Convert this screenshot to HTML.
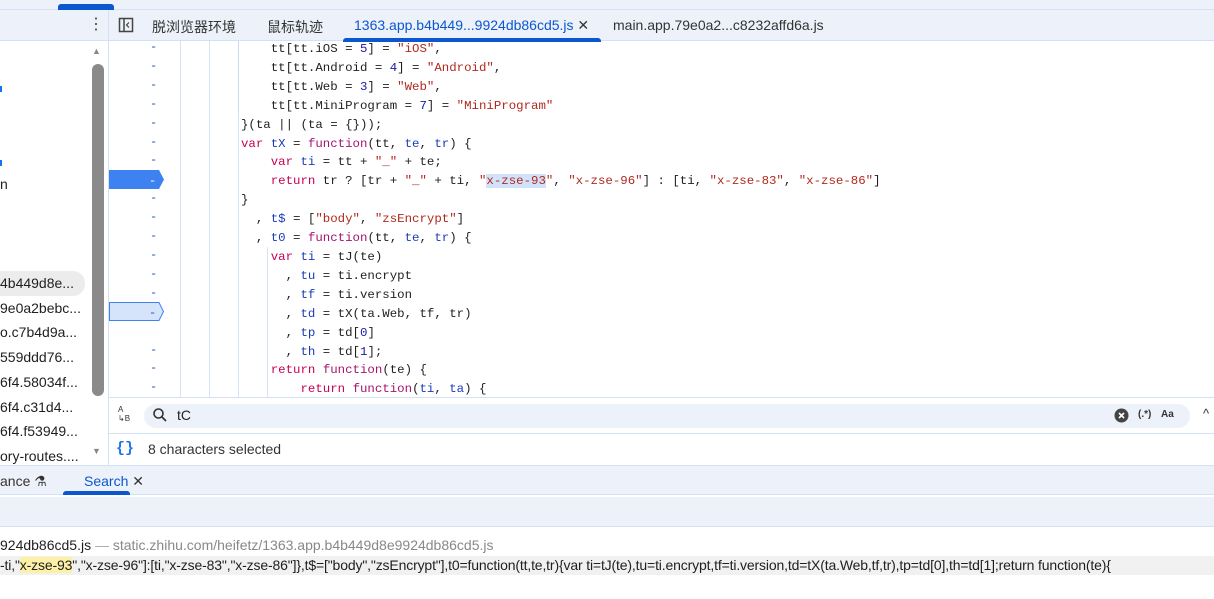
<!DOCTYPE html>
<html><head><meta charset="utf-8">
<style>
*{margin:0;padding:0;box-sizing:border-box}
body{width:1214px;height:599px;overflow:hidden;background:#fff;font-family:"Liberation Sans","Noto Sans CJK SC",sans-serif;position:relative;color:#1f1f1f}
.a{position:absolute}
.code{font-family:"Liberation Mono","DejaVu Sans Mono",monospace;font-size:12.4px;white-space:pre;color:#1f1f1f}
.k{color:#c80054}.f{color:#a31570}.d{color:#1a3cb8}.s{color:#b0291e}.n{color:#1a1aa6}
.dash{position:absolute;left:150px;font-family:"Liberation Mono",monospace;font-size:12px;color:#1a56c8}
.side{font-size:14px;color:#1f1f1f;position:absolute;left:0}
.g{position:absolute;width:1px;background:#d6e2f7}
</style></head><body>
<div class="a" style="left:0;top:0;width:1214px;height:10px;background:#edf2fa;border-bottom:1px solid #d3e0f5"></div>
<div class="a" style="left:58px;top:4px;width:56px;height:6px;background:#0b57d0;border-radius:3px 3px 0 0"></div>
<div class="a" style="left:0;top:10px;width:1214px;height:31px;background:#edf2fa;border-bottom:1px solid #d3e0f5"></div>
<div class="a" style="left:108px;top:10px;width:1px;height:31px;background:#d3e0f5"></div>
<div class="a" style="left:88px;top:17px;font-size:16px;color:#444;line-height:16px">⋮</div>
<svg class="a" style="left:118px;top:17px" width="16" height="16"><rect x="1.5" y="1.5" width="13" height="13" fill="none" stroke="#444" stroke-width="1.5"/><line x1="6" y1="2" x2="6" y2="14" stroke="#444" stroke-width="1.5"/><path d="M11 5.5 L8.5 8 L11 10.5" fill="none" stroke="#444" stroke-width="1.2"/></svg>
<div class="a" style="left:152px;top:17px;font-size:14px;color:#333">脱浏览器环境</div>
<div class="a" style="left:267px;top:17px;font-size:14px;color:#333">鼠标轨迹</div>
<div class="a" style="left:354px;top:17px;font-size:14px;color:#0b57d0">1363.app.b4b449...9924db86cd5.js <span style="color:#333">✕</span></div>
<div class="a" style="left:343px;top:38px;width:258px;height:4px;background:#0b57d0;border-radius:3px 3px 0 0"></div>
<div class="a" style="left:613px;top:17px;font-size:14px;color:#333">main.app.79e0a2...c8232affd6a.js</div>
<div class="a" style="left:92px;top:64px;width:12px;height:332px;background:#8a8a8a;border-radius:6px"></div>
<div class="a" style="left:92px;top:46px;font-size:9px;color:#888">▲</div>
<div class="a" style="left:92px;top:446px;font-size:9px;color:#888">▼</div>
<div class="a" style="left:0;top:86px;width:2px;height:6px;background:#1a73e8"></div>
<div class="a" style="left:0;top:160px;width:2px;height:6px;background:#1a73e8"></div>
<div class="side" style="top:176px">n</div>
<div class="a" style="left:0;top:271px;width:85px;height:25px;background:#ececec;border-radius:0 12px 12px 0"></div>
<div class="side" style="top:275px">4b449d8e...</div>
<div class="side" style="top:300px">9e0a2bebc...</div>
<div class="side" style="top:324px">o.c7b4d9a...</div>
<div class="side" style="top:349px">559ddd76...</div>
<div class="side" style="top:374px">6f4.58034f...</div>
<div class="side" style="top:399px">6f4.c31d4...</div>
<div class="side" style="top:423px">6f4.f53949...</div>
<div class="side" style="top:448px">ory-routes....</div>
<div class="a" style="left:108px;top:41px;width:1px;height:424px;background:#d3e0f5"></div>
<div class="g" style="left:180px;top:41px;height:356px"></div>
<div class="g" style="left:209px;top:41px;height:356px"></div>
<div class="g" style="left:238px;top:41px;height:356px"></div>
<div class="g" style="left:267px;top:247px;height:150px"></div>
<div class="g" style="left:238px;top:41px;height:72px;background:#c9d8f3"></div>
<svg class="a" style="left:109px;top:170px" width="56" height="19"><path d="M0 0H50L55 9.5L50 19H0Z" fill="#3e82f2"/><text x="40" y="14" font-size="12" fill="#fff" font-family="Liberation Mono">-</text></svg>
<svg class="a" style="left:109px;top:302px" width="56" height="19"><path d="M0.5 0.5H50L54.5 9.5L50 18.5H0.5Z" fill="#d5e3fb" stroke="#3e82f2"/><text x="40" y="14" font-size="12" fill="#1a56c8" font-family="Liberation Mono">-</text></svg>
<div class="dash" style="top:40px">-</div><div class="dash" style="top:59px">-</div><div class="dash" style="top:78px">-</div><div class="dash" style="top:97px">-</div><div class="dash" style="top:116px">-</div><div class="dash" style="top:135px">-</div><div class="dash" style="top:153px">-</div><div class="dash" style="top:191px">-</div><div class="dash" style="top:210px">-</div><div class="dash" style="top:229px">-</div><div class="dash" style="top:248px">-</div><div class="dash" style="top:267px">-</div><div class="dash" style="top:286px">-</div><div class="dash" style="top:343px">-</div><div class="dash" style="top:361px">-</div><div class="dash" style="top:380px">-</div>
<div class="a" style="left:0;top:41px;width:1214px;height:356px;overflow:hidden">
<div class="a code" style="left:241px;top:-1px;line-height:18.9px">    tt[tt.iOS = <span class="n">5</span>] = <span class="s">"iOS"</span>,
    tt[tt.Android = <span class="n">4</span>] = <span class="s">"Android"</span>,
    tt[tt.Web = <span class="n">3</span>] = <span class="s">"Web"</span>,
    tt[tt.MiniProgram = <span class="n">7</span>] = <span class="s">"MiniProgram"</span>
}(ta || (ta = {}));
<span class="k">var</span> <span class="d">tX</span> = <span class="f">function</span>(tt, <span class="d">te</span>, <span class="d">tr</span>) {
    <span class="k">var</span> <span class="d">ti</span> = tt + <span class="s">"_"</span> + te;
    <span class="k">return</span> tr ? [tr + <span class="s">"_"</span> + ti, <span class="s">"<span style="background:#d3e2fb">x-zse-93</span>"</span>, <span class="s">"x-zse-96"</span>] : [ti, <span class="s">"x-zse-83"</span>, <span class="s">"x-zse-86"</span>]
}
  , <span class="d">t$</span> = [<span class="s">"body"</span>, <span class="s">"zsEncrypt"</span>]
  , <span class="d">t0</span> = <span class="f">function</span>(tt, <span class="d">te</span>, <span class="d">tr</span>) {
    <span class="k">var</span> <span class="d">ti</span> = tJ(te)
      , <span class="d">tu</span> = ti.encrypt
      , <span class="d">tf</span> = ti.version
      , <span class="d">td</span> = tX(ta.Web, tf, tr)
      , <span class="d">tp</span> = td[<span class="n">0</span>]
      , <span class="d">th</span> = td[<span class="n">1</span>];
    <span class="k">return</span> <span class="f">function</span>(te) {
        <span class="k">return</span> <span class="f">function</span>(<span class="d">ti</span>, <span class="d">ta</span>) {</div>
</div>
<div class="a" style="left:109px;top:397px;width:1105px;height:1px;background:#d3e0f5"></div>
<div class="a" style="left:118px;top:405px;font-size:8px;color:#333;line-height:9px">A<br>↳B</div>
<div class="a" style="left:144px;top:404px;width:1046px;height:24px;background:#edf2fa;border-radius:12px"></div>
<svg class="a" style="left:152px;top:407px" width="16" height="16"><circle cx="6.5" cy="6.5" r="4.5" fill="none" stroke="#333" stroke-width="1.6"/><line x1="10" y1="10" x2="14" y2="14" stroke="#333" stroke-width="1.8"/></svg>
<div class="a" style="left:177px;top:407px;font-size:14px;color:#1f1f1f">tC</div>
<svg class="a" style="left:1114px;top:408px" width="15" height="15"><circle cx="7.5" cy="7.5" r="7" fill="#444"/><path d="M5 5L10 10M10 5L5 10" stroke="#fff" stroke-width="1.6"/></svg>
<div class="a" style="left:1138px;top:409px;font-size:10px;color:#333;font-weight:bold">(.*)</div>
<div class="a" style="left:1161px;top:409px;font-size:10px;color:#333;font-weight:bold">Aa</div>
<div class="a" style="left:1203px;top:406px;font-size:13px;color:#333">^</div>
<div class="a" style="left:109px;top:433px;width:1105px;height:1px;background:#d3e0f5"></div>
<div class="a" style="left:116px;top:440px;font-size:15px;color:#1a73e8;font-weight:bold;font-family:'Liberation Mono',monospace">{}</div>
<div class="a" style="left:148px;top:441px;font-size:14px;color:#333">8 characters selected</div>
<div class="a" style="left:0;top:465px;width:1214px;height:30px;background:#edf2fa;border-top:1px solid #d3e0f5;border-bottom:1px solid #d3e0f5"></div>
<div class="a" style="left:0;top:473px;font-size:14px;color:#333">ance ⚗</div>
<div class="a" style="left:84px;top:473px;font-size:14px;color:#0b57d0">Search <span style="color:#333">✕</span></div>
<div class="a" style="left:63px;top:491px;width:67px;height:4px;background:#0b57d0;border-radius:3px 3px 0 0"></div>
<div class="a" style="left:0;top:497px;width:1214px;height:30px;background:#edf2fa;border-bottom:1px solid #d3e0f5"></div>
<div class="a" style="left:0;top:537px;font-size:14px;color:#1f1f1f;white-space:nowrap">924db86cd5.js <span style="color:#aaa">—</span> <span style="color:#888">static.zhihu.com/heifetz/1363.app.b4b449d8e9924db86cd5.js</span></div>
<div class="a" style="left:0;top:556px;width:1214px;height:19px;background:#f1f1f1"></div>
<div class="a" style="left:0;top:557px;font-size:14px;color:#1f1f1f;white-space:nowrap;letter-spacing:-0.15px">-ti,"<span style="background:#fdf1a8">x-zse-93</span>","x-zse-96"]:[ti,"x-zse-83","x-zse-86"]},t$=["body","zsEncrypt"],t0=function(tt,te,tr){var ti=tJ(te),tu=ti.encrypt,tf=ti.version,td=tX(ta.Web,tf,tr),tp=td[0],th=td[1];return function(te){</div>
</body></html>
